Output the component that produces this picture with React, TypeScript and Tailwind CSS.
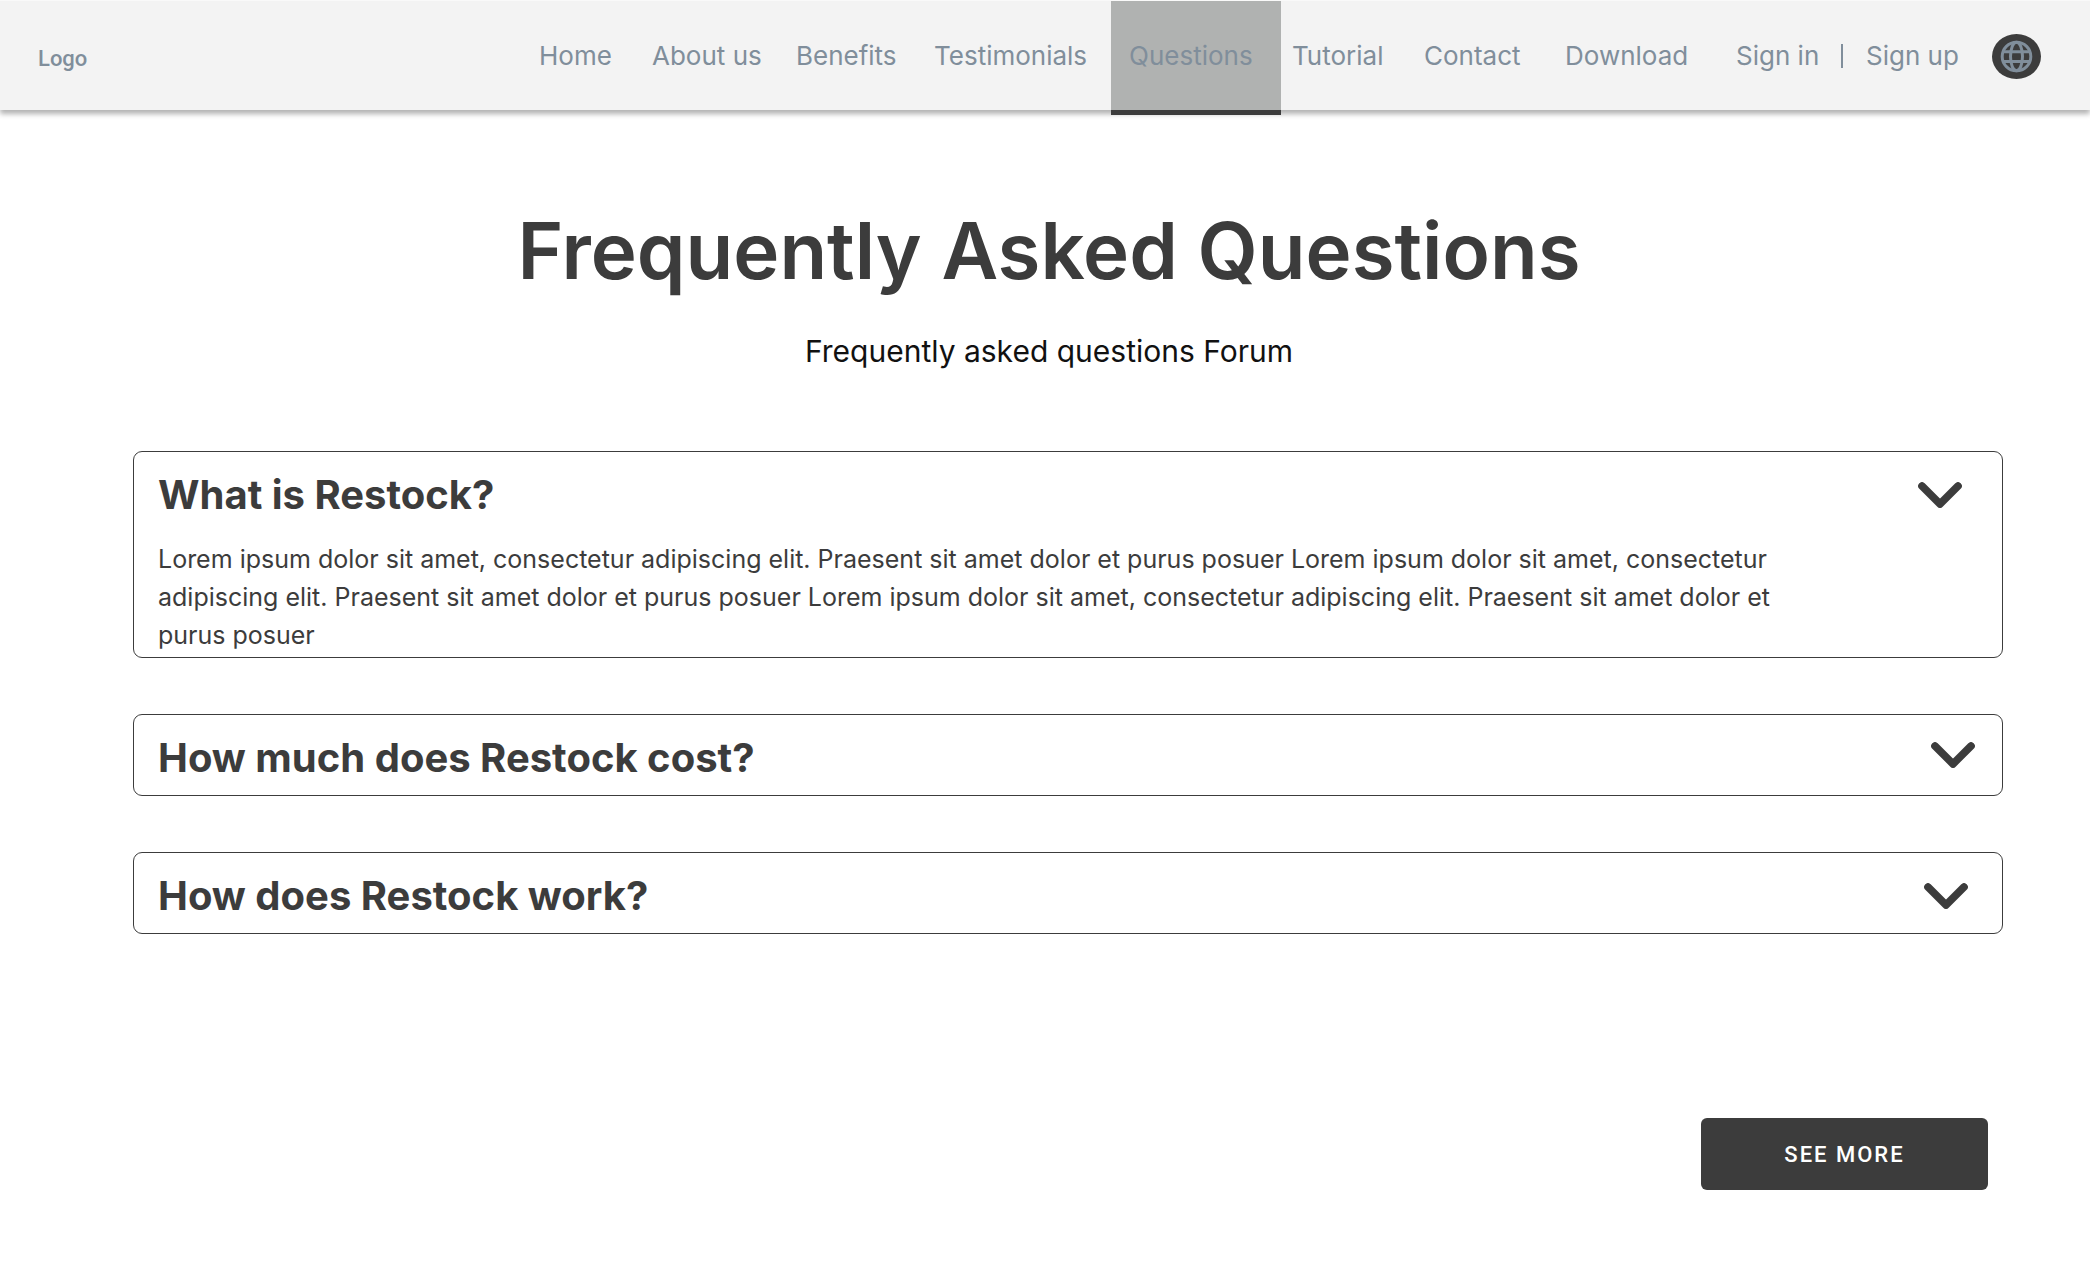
import { useState } from "react";

type NavItem = { label: string; href: string; className: string };

const navItems: NavItem[] = [
  { label: "Home", href: "#home", className: "w-[113px] pl-[18px]" },
  { label: "About us", href: "#about", className: "w-[144px] pl-[18px]" },
  { label: "Benefits", href: "#benefits", className: "w-[138px] pl-[18px]" },
  { label: "Testimonials", href: "#testimonials", className: "w-[195px] pl-[18px]" },
  { label: "Questions", href: "#questions", className: "w-[170px] pl-[18px]" },
  { label: "Tutorial", href: "#tutorial", className: "w-[132px] pl-[11px]" },
  { label: "Contact", href: "#contact", className: "w-[141px] pl-[11px]" },
  { label: "Download", href: "#download", className: "w-[171px] pl-[11px]" },
];

type Faq = { question: string; answer: string; chevron: string };

const answer =
  "Lorem ipsum dolor sit amet, consectetur adipiscing elit. Praesent sit amet dolor et purus posuer Lorem ipsum dolor sit amet, consectetur adipiscing elit. Praesent sit amet dolor et purus posuer Lorem ipsum dolor sit amet, consectetur adipiscing elit. Praesent sit amet dolor et purus posuer";

const faqs: Faq[] = [
  { question: "What is Restock?", answer, chevron: "mr-4" },
  { question: "How much does Restock cost?", answer, chevron: "mr-[3px] mb-1.5" },
  { question: "How does Restock work?", answer, chevron: "mr-2.5" },
];

function Chevron({ className }: { className: string }) {
  return (
    <svg viewBox="0 0 44 26" className={`h-[26px] w-11 shrink-0 ${className}`} fill="none" aria-hidden="true">
      <path d="M4 4 22 22 40 4" stroke="currentColor" strokeWidth="7.6" strokeLinecap="round" strokeLinejoin="round" />
    </svg>
  );
}

function GlobeIcon() {
  return (
    <svg viewBox="0 0 49 45" className="h-[45px] w-[49px]" fill="none" aria-hidden="true">
      <ellipse cx="24.5" cy="22.5" rx="24.5" ry="22.5" fill="#3c3c3c" />
      <g stroke="#808e9b" strokeWidth="3">
        <circle cx="24.5" cy="22.5" r="14.3" />
        <ellipse cx="24.5" cy="22.5" rx="6" ry="14.3" />
        <path d="M11 17.8H38M11 27.4H38" />
      </g>
    </svg>
  );
}

function Header() {
  return (
    <header className="relative flex h-[110px] items-center justify-between border-t border-[#f9f9f9] bg-[#f3f3f3] pr-[49px] pl-[38px] text-[#808e9b] shadow-[0_4px_5px_rgba(0,0,0,0.3)]">
      <a href="#home" className="pt-1.5 font-['Roboto',sans-serif] text-[22px] font-medium">
        Logo
      </a>
      <nav aria-label="Main" className="flex h-full items-center text-[26px] whitespace-nowrap">
        {navItems.map((item) => {
          const active = item.label === "Questions";
          return (
            <a
              key={item.label}
              href={item.href}
              aria-current={active ? "page" : undefined}
              className={`relative flex h-full items-center ${item.className} ${
                active ? "bg-[#b0b2b1] after:absolute after:inset-x-0 after:top-full after:h-[5px] after:bg-[#3c3c3c]" : ""
              }`}
            >
              {item.label}
            </a>
          );
        })}
        <a href="#sign-in" className="w-[105px] pl-[11px]">
          Sign in
        </a>
        <span className="mr-[23px] ml-[11px] h-6 w-0.5 bg-[#808e9b]" />
        <a href="#sign-up" className="w-[126px]">
          Sign up
        </a>
        <button type="button" aria-label="Change language" className="pt-0.5">
          <GlobeIcon />
        </button>
      </nav>
    </header>
  );
}

function FaqCard({ faq, initiallyOpen }: { faq: Faq; initiallyOpen: boolean }) {
  const [open, setOpen] = useState(initiallyOpen);
  return (
    <section className={`rounded-[9px] border border-[#3c3c3c] pt-[19px] pr-6 pl-6 ${open ? "pb-[3px]" : "pb-[13px]"}`}>
      <h2>
        <button
          type="button"
          aria-expanded={open}
          onClick={() => setOpen(!open)}
          className="flex h-12 w-full items-center justify-between text-left text-[40px] leading-[48px] font-bold"
        >
          {faq.question}
          <Chevron className={faq.chevron} />
        </button>
      </h2>
      {open && <p className="mt-[21px] max-w-[1640px] text-[25px] leading-[38px]">{faq.answer}</p>}
    </section>
  );
}

export default function App() {
  return (
    <div className="min-h-screen bg-white font-['Inter',sans-serif] text-[#3c3c3c]">
      <Header />
      <main className="pb-20">
        <div className="mt-[93px] pl-2 text-center">
          <h1 className="text-[78px] leading-[96px] font-semibold">Frequently Asked Questions</h1>
          <p className="mt-8 text-[30px] leading-10 text-[#111111]">Frequently asked questions Forum</p>
        </div>
        <div className="mt-20 mr-[87px] ml-[133px] flex flex-col gap-14">
          {faqs.map((faq, i) => (
            <FaqCard key={faq.question} faq={faq} initiallyOpen={i === 0} />
          ))}
        </div>
        <div className="mt-[184px] mr-[102px] flex justify-end">
          <button
            type="button"
            className="h-[72px] w-[287px] rounded-md bg-[#3c3c3c] font-['Roboto',sans-serif] text-[22px] font-medium tracking-[2px] text-white"
          >
            SEE MORE
          </button>
        </div>
      </main>
    </div>
  );
}
